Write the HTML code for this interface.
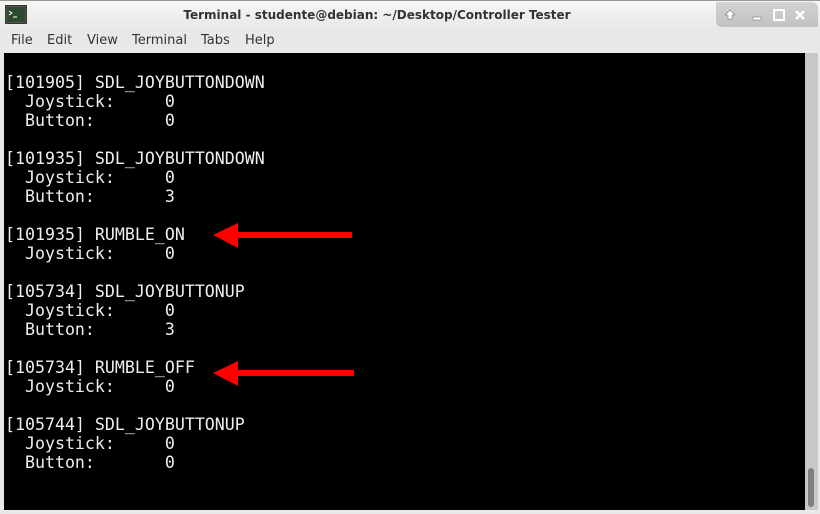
<!DOCTYPE html><html><head><style>
body{margin:0;width:820px;height:514px;overflow:hidden;background:#e8e8e7;font-family:"DejaVu Sans","Liberation Sans",sans-serif;position:relative}
.title{position:absolute;left:0;top:0;width:820px;height:28px;background:linear-gradient(#f6f6f5,#e9e9e8);border-top:1px solid #999;box-sizing:border-box}
.title .t{position:absolute;left:0;right:66px;top:7px;text-align:center;font-size:12px;font-weight:bold;color:#333}
.btns{position:absolute;right:2px;top:1px;width:102px;height:25px;background:linear-gradient(#d2d2d1,#c2c2c1);border-radius:0 6px 0 6px}
.menu{position:absolute;top:28px;left:0;width:820px;height:25px;font-size:13px;color:#333}
.menu span{position:absolute;top:5px}
.term{position:absolute;left:4px;top:53px;width:801px;height:457px;background:#000}
.sb{position:absolute;left:805px;top:53px;width:13px;height:457px;background:#c7c9c7}
.th{position:absolute;left:3px;top:415px;width:6px;height:39px;background:#7e807e;border-radius:3px}
pre{margin:0;position:absolute;left:1px;top:1px;color:#eee;font-family:"DejaVu Sans Mono","Liberation Mono",monospace;font-size:16.6px;line-height:19px}
</style></head><body>
<div class="title">
<svg style="position:absolute;left:5px;top:4px" width="22" height="19"><rect x="0.5" y="0.5" width="21" height="18" fill="#555" stroke="#333"/><rect x="2" y="2" width="18" height="15" fill="#2e4a2e"/><path d="M4 6l3 2-3 2M8 12h4" stroke="#fff" stroke-width="1" fill="none"/></svg>
<div class="t">Terminal - studente@debian: ~/Desktop/Controller Tester</div>
<div class="btns">
<svg width="102" height="25" style="position:absolute;left:0;top:0"><path d="M14 8l-5 5h3v4h4v-4h3z" fill="#fff" stroke="#777" stroke-width="0.6"/><rect x="37" y="15" width="8" height="3" fill="#fff" stroke="#777" stroke-width="0.6"/><rect x="58" y="8" width="10" height="10" fill="none" stroke="#fff" stroke-width="2"/><path d="M80 9l8 8M88 9l-8 8" stroke="#fff" stroke-width="2.4"/></svg>
</div></div>
<div class="menu"><span style="left:11px">File</span><span style="left:47px">Edit</span><span style="left:87px">View</span><span style="left:132px">Terminal</span><span style="left:201px">Tabs</span><span style="left:245px">Help</span></div>
<div class="term"><pre>

[101905] SDL_JOYBUTTONDOWN
  Joystick:     0
  Button:       0

[101935] SDL_JOYBUTTONDOWN
  Joystick:     0
  Button:       3

[101935] RUMBLE_ON
  Joystick:     0

[105734] SDL_JOYBUTTONUP
  Joystick:     0
  Button:       3

[105734] RUMBLE_OFF
  Joystick:     0

[105744] SDL_JOYBUTTONUP
  Joystick:     0
  Button:       0
</pre>
<svg width="801" height="457" style="position:absolute;left:0;top:0"><g fill="red"><path d="M209 182l25-12v25z"/><rect x="233" y="179" width="115" height="6"/><path d="M209 320l25-12v25z"/><rect x="233" y="317" width="117" height="6"/></g></svg>
</div>
<div class="sb"><div class="th"></div></div>
</body></html>
